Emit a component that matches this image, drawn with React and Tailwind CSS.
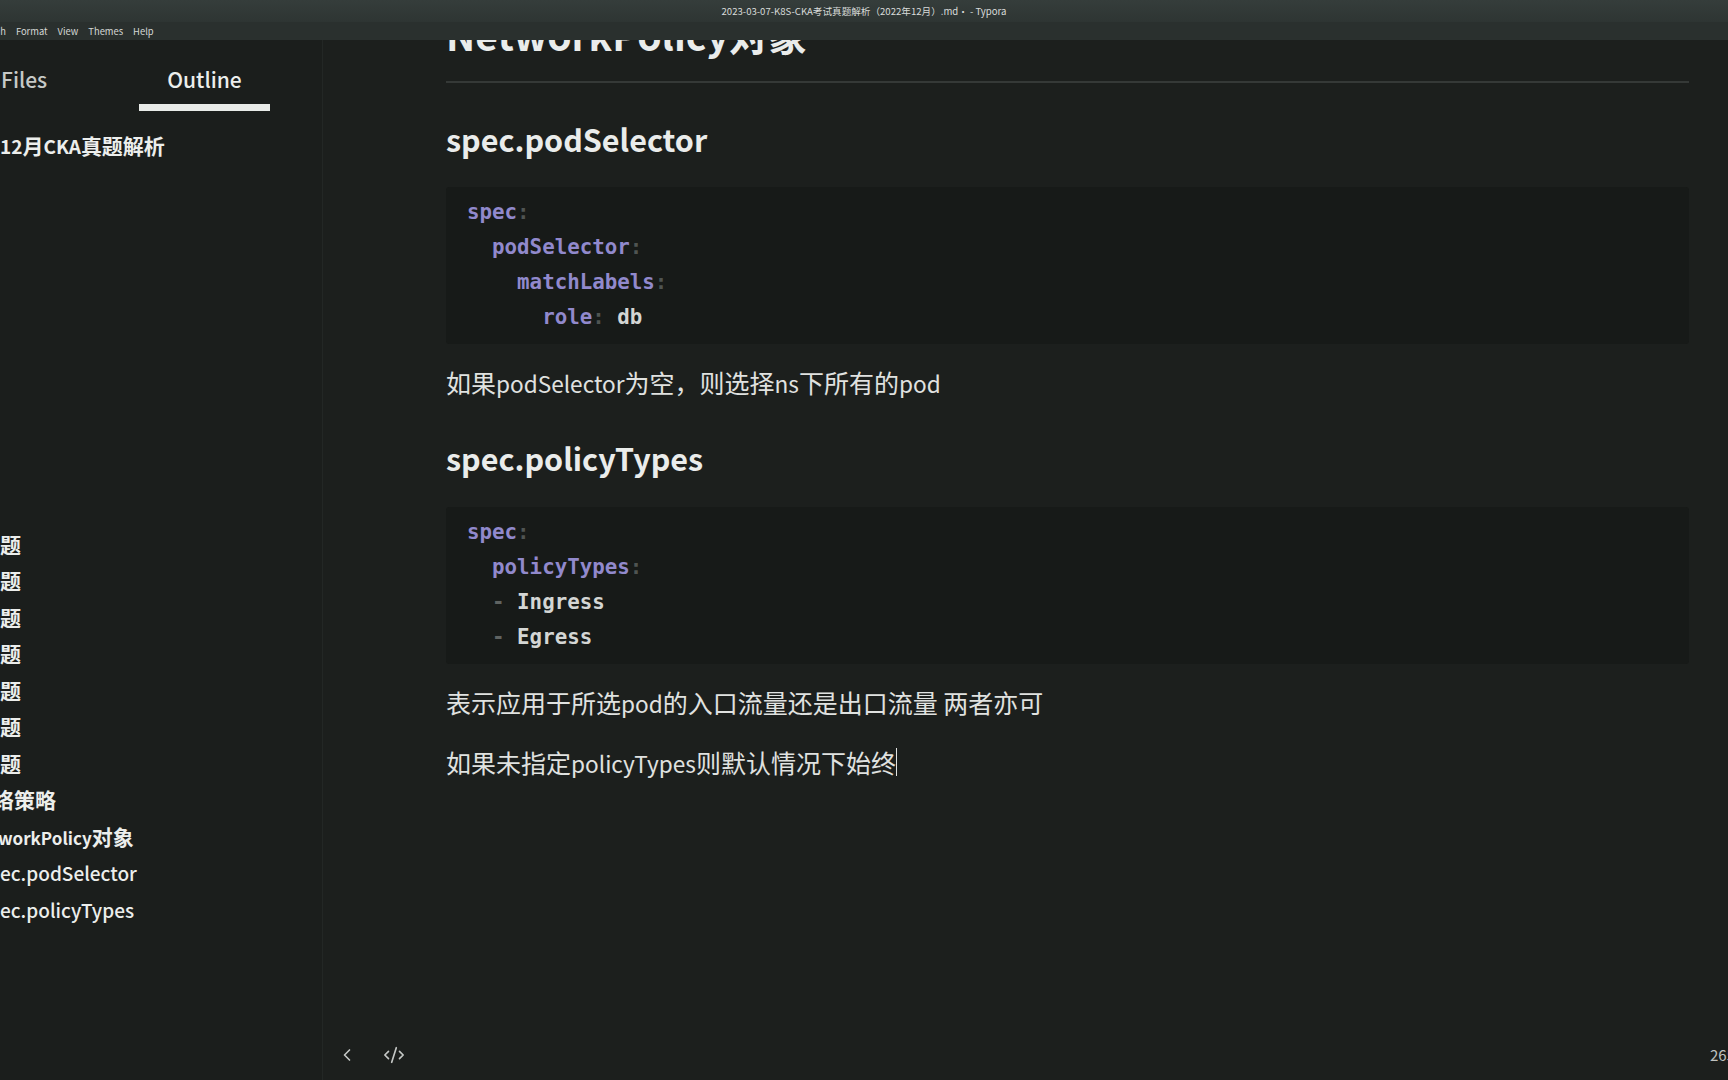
import React from "react";
import { ChevronLeft, CodeXml } from "lucide-react";

const SANS = { fontFamily: '"Noto Sans CJK SC", "Noto Sans", sans-serif' };

function Key({ children }) {
  return <span className="text-[#9189cc]">{children}</span>;
}
function Colon() {
  return <span className="text-[#4f5452]">:</span>;
}
function Dash() {
  return <span className="text-[#5f6361]">-</span>;
}
// Latin runs inside body paragraphs
function L({ children }) {
  return <span className="text-[22.6px] leading-none">{children}</span>;
}
// Latin runs inside the outline
function SL({ children, medium, size = "text-[19px]" }) {
  return (
    <span className={`${size} leading-none ${medium ? "font-medium" : "font-semibold"}`}>
      {children}
    </span>
  );
}

function CodeBlock({ lines }) {
  return (
    <div className="rounded-[3px] bg-[#171a18] py-[8px] pl-[21px] font-['DejaVu_Sans_Mono',monospace] text-[20.8px] leading-[35.3px] font-bold text-[#d4d6d4] whitespace-pre">
      {lines.map((l, i) => (
        <div key={i}>{l}</div>
      ))}
    </div>
  );
}

export default function App() {
  const item = "h-[36.5px] leading-[36.5px]";
  return (
    <div
      className="w-[1728px] h-[1080px] flex flex-col overflow-hidden bg-[#1c1f1d] text-[#e4e6e4]"
      style={SANS}
    >
      {/* Title bar */}
      <div className="h-[22px] shrink-0 bg-gradient-to-b from-[#353d3b] to-[#2e3533] flex items-center justify-center text-[9.6px] text-[#d9dcda] whitespace-nowrap">
        2023-03-07-K8S-CKA考试真题解析（2022年12月）.md• - Typora
      </div>
      {/* Menu bar */}
      <div className="h-[18px] shrink-0 bg-[#2a302e] flex items-center gap-[10px] text-[9.4px] text-[#d4d7d5] whitespace-nowrap overflow-hidden">
        <span className="-ml-[39px]">Paragraph</span>
        <span>Format</span>
        <span>View</span>
        <span>Themes</span>
        <span>Help</span>
      </div>

      <div className="flex flex-1 min-h-0">
        {/* Sidebar */}
        <aside className="w-[323px] shrink-0 bg-[#1b1e1c] border-r border-[#232725] overflow-hidden flex flex-col">
          <div className="flex pt-[25px] text-[21px] font-medium leading-[28px]">
            <div className="w-[139px] pl-[1px] text-[#c6c9c7]">Files</div>
            <div className="w-[131px] flex flex-col items-center text-[#eceeec]">
              <span>Outline</span>
              <div className="mt-[11px] h-[7px] w-full bg-[#e8ebe8]" />
            </div>
          </div>
          <div className="flex flex-col text-[21px] text-[#eceeec] whitespace-nowrap font-bold">
            <div className={`mt-[15.5px] ${item}`}>
              <SL>12</SL>月<SL>CKA</SL>真题解析
            </div>
            <div className="h-[362.5px]" />
            {Array.from({ length: 7 }).map((_, i) => (
              <div key={i} className={item}>题</div>
            ))}
            <div className={`${item} -ml-[7px]`}>络策略</div>
            <div className={`${item} -ml-[2px]`}>
              <SL size="text-[17px]">workPolicy</SL>对象
            </div>
            <div className={item}>
              <SL medium>ec.podSelector</SL>
            </div>
            <div className={item}>
              <SL medium>ec.policyTypes</SL>
            </div>
          </div>
        </aside>

        {/* Editor */}
        <main className="flex-1 min-w-0 flex flex-col bg-[#1c1f1d] overflow-hidden">
          <div className="flex-1 min-h-0 pl-[123px] pr-[39px]">
            <div className="-mt-[30px]">
              <h2 className="text-[39px] leading-[48px] font-bold text-[#eaeceb] pb-[23px] border-b-2 border-[#353937]">
                NetworkPolicy对象
              </h2>
              <h3 className="mt-[35.5px] text-[30.5px] leading-[40px] font-semibold text-[#eaeceb]">
                spec.podSelector
              </h3>
              <div className="mt-[28px]">
                <CodeBlock
                  lines={[
                    <><Key>spec</Key><Colon /></>,
                    <>  <Key>podSelector</Key><Colon /></>,
                    <>    <Key>matchLabels</Key><Colon /></>,
                    <>      <Key>role</Key><Colon /> db</>,
                  ]}
                />
              </div>
              <p className="mt-[18.4px] h-[40px] text-[25px] leading-[40px] text-[#e0e2e0]">
                如果<L>podSelector</L>为空，则选择<L>ns</L>下所有的<L>pod</L>
              </p>
              <h3 className="mt-[36px] text-[30.5px] leading-[40px] font-semibold text-[#eaeceb]">
                spec.policyTypes
              </h3>
              <div className="mt-[28.5px]">
                <CodeBlock
                  lines={[
                    <><Key>spec</Key><Colon /></>,
                    <>  <Key>policyTypes</Key><Colon /></>,
                    <>  <Dash /> Ingress</>,
                    <>  <Dash /> Egress</>,
                  ]}
                />
              </div>
              <p className="mt-[18.4px] h-[40px] text-[25px] leading-[40px] text-[#e0e2e0]">
                表示应用于所选<L>pod</L>的入口流量还是出口流量 两者亦可
              </p>
              <p className="mt-[20px] h-[40px] text-[25px] leading-[40px] text-[#e0e2e0] flex items-center">
                <span>
                  如果未指定<L>policyTypes</L>则默认情况下始终
                </span>
                <span className="inline-block w-[1px] h-[28px] bg-[#e0e2e0]" />
              </p>
            </div>
          </div>
          {/* Footer */}
          <div className="h-[50px] shrink-0 flex items-center text-[#c4c7c5]">
            <ChevronLeft className="ml-[14px] w-[20px] h-[20px]" strokeWidth={2} />
            <CodeXml className="ml-[26px] w-[22px] h-[22px]" strokeWidth={1.8} />
            <div className="ml-auto w-[18px] overflow-hidden whitespace-nowrap text-[15px] text-[#bfc2c0]">
              2654 词
            </div>
          </div>
        </main>
      </div>
    </div>
  );
}
